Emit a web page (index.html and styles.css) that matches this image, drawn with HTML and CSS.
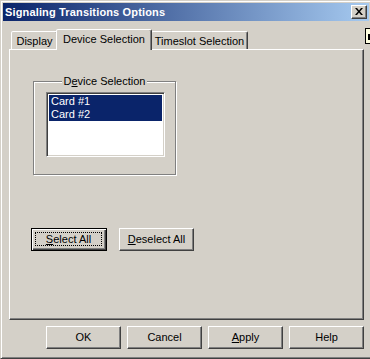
FILE: index.html
```html
<!DOCTYPE html>
<html>
<head>
<meta charset="utf-8">
<link rel="stylesheet" href="styles.css">
</head>
<body>
<div class="window">
  <div class="titlebar">
    <span class="title">Signaling Transitions Options</span>
    <div class="close">
      <svg width="8" height="7" viewBox="0 0 8 7"><path d="M0 0h2l2 2.5L6 0h2L5 3.5 8 7H6L4 4.5 2 7H0l3-3.5z" fill="#000"/></svg>
    </div>
  </div>
  <div class="content">
    <div class="tabs">
      <div class="tab tab-display">Display</div>
      <div class="tab tab-active">Device Selection</div>
      <div class="tab tab-timeslot">Timeslot Selection</div>
    </div>
    <div class="panel">
      <div class="group">
        <div class="legend"><span>D<u>e</u>vice Selection</span></div>
        <div class="listbox">
          <div class="item sel">Card #1</div>
          <div class="item sel">Card #2</div>
        </div>
      </div>
      <div class="panel-buttons">
        <div class="btn default"><span class="focus"><u>S</u>elect All</span></div>
        <div class="btn"><span><u>D</u>eselect All</span></div>
      </div>
    </div>
    <div class="footer">
      <div class="btn">OK</div>
      <div class="btn">Cancel</div>
      <div class="btn"><span><u>A</u>pply</span></div>
      <div class="btn">Help</div>
    </div>
  </div>
  <div class="tip"><div class="tip-mark"></div></div>
</div>
</body>
</html>
```
FILE: styles.css
```css
html, body {
  margin: 0;
  padding: 0;
  overflow: hidden;
  background: #d4d0c8;
}
body {
  font-family: "Liberation Sans", Arial, sans-serif;
  font-size: 11px;
  color: #000;
}
.window {
  position: relative;
  box-sizing: border-box;
  width: 372px;
  height: 359px;
  background: #d4d0c8;
  border: 1px solid;
  border-color: #d4d0c8 #404040 #404040 #d4d0c8;
  box-shadow: inset 1px 1px 0 #fff, inset -1px -1px 0 #808080;
  padding: 2px;
}
.titlebar {
  height: 18px;
  background: linear-gradient(to right, #0a246a, #a6caf0);
  display: flex;
  align-items: center;
  justify-content: space-between;
  padding: 0 2px 0 2px;
}
.title {
  color: #fff;
  font-weight: bold;
  font-size: 11px;
  letter-spacing: 0.15px;
  line-height: 18px;
}
.close {
  box-sizing: border-box;
  width: 16px;
  height: 14px;
  background: #d4d0c8;
  border: 1px solid;
  border-color: #fff #404040 #404040 #fff;
  box-shadow: inset -1px -1px 0 #808080;
  display: flex;
  align-items: center;
  justify-content: center;
  padding: 0 1px 1px 0;
}
.close svg { display: block; }
.content {
  padding: 8px 0 0 6px;
}
.tabs {
  display: flex;
  align-items: flex-end;
  height: 20px;
  padding-left: 2px;
  position: relative;
  z-index: 2;
}
.tab {
  box-sizing: border-box;
  height: 18px;
  border: 1px solid;
  border-bottom: none;
  border-color: #fff #404040 transparent #fff;
  box-shadow: inset -1px 0 0 #808080;
  border-radius: 2px 2px 0 0;
  background: #d4d0c8;
  padding: 3px 0 0 0;
  text-align: center;
  line-height: 13px;
  white-space: nowrap;
}
.tab-display { width: 47px; margin-right: -2px; }
.tab-active {
  width: 96px;
  height: 21px;
  margin-bottom: -1px;
  padding-top: 3px;
  position: relative;
  z-index: 3;
}
.tab-timeslot { width: 97px; margin-left: -1px; }
.panel {
  box-sizing: border-box;
  width: 355px;
  height: 271px;
  border: 1px solid;
  border-color: #fff #404040 #404040 #fff;
  box-shadow: inset -1px -1px 0 #808080;
  padding: 31px 0 0 23px;
  position: relative;
  z-index: 1;
}
.group {
  box-sizing: border-box;
  position: relative;
  width: 143px;
  height: 94px;
  border: 1px solid #808080;
  box-shadow: inset 1px 1px 0 #fff, 1px 1px 0 #fff;
  padding: 10px 0 0 12px;
}
.legend {
  position: absolute;
  top: -7px;
  left: 0;
  right: 0;
  display: flex;
  justify-content: center;
  line-height: 13px;
}
.legend span {
  background: #d4d0c8;
  padding: 0 2px 0 2px;
}
.listbox {
  box-sizing: border-box;
  width: 119px;
  height: 65px;
  background: #fff;
  border: 1px solid;
  border-color: #808080 #fff #fff #808080;
  box-shadow: inset 1px 1px 0 #404040, inset -1px -1px 0 #d4d0c8;
  padding: 2px 2px 0 2px;
}
.item {
  height: 13px;
  line-height: 13px;
  padding-left: 2px;
}
.item.sel {
  background: #0a246a;
  color: #fff;
}
.panel-buttons {
  display: flex;
  gap: 12px;
  margin: 53px 0 0 -2px;
}
.btn {
  box-sizing: border-box;
  width: 75px;
  height: 23px;
  border: 1px solid;
  border-color: #fff #404040 #404040 #fff;
  box-shadow: inset -1px -1px 0 #808080;
  background: #d4d0c8;
  display: flex;
  align-items: center;
  justify-content: center;
  line-height: 13px;
  padding-bottom: 1px;
}
.btn.default {
  width: 76px;
  border: 1px solid #000;
  box-shadow: inset 1px 1px 0 #fff, inset -1px -1px 0 #404040, inset -2px -2px 0 #808080;
  padding: 3px 4px 4px 3px;
}
.btn.default .focus {
  box-sizing: border-box;
  flex: 1;
  align-self: stretch;
  border: 1px dotted #000;
  display: flex;
  align-items: center;
  justify-content: center;
}
.footer {
  display: flex;
  gap: 6px;
  padding: 6px 0 0 37px;
}
.tip {
  position: absolute;
  left: 364px;
  top: 27px;
  width: 10px;
  height: 16px;
  box-sizing: border-box;
  border: 1px solid #000;
  background: #ffffe1;
}
.tip-mark {
  position: absolute;
  left: 2px;
  top: 5px;
  width: 2px;
  height: 6px;
  background: #000;
}
```
